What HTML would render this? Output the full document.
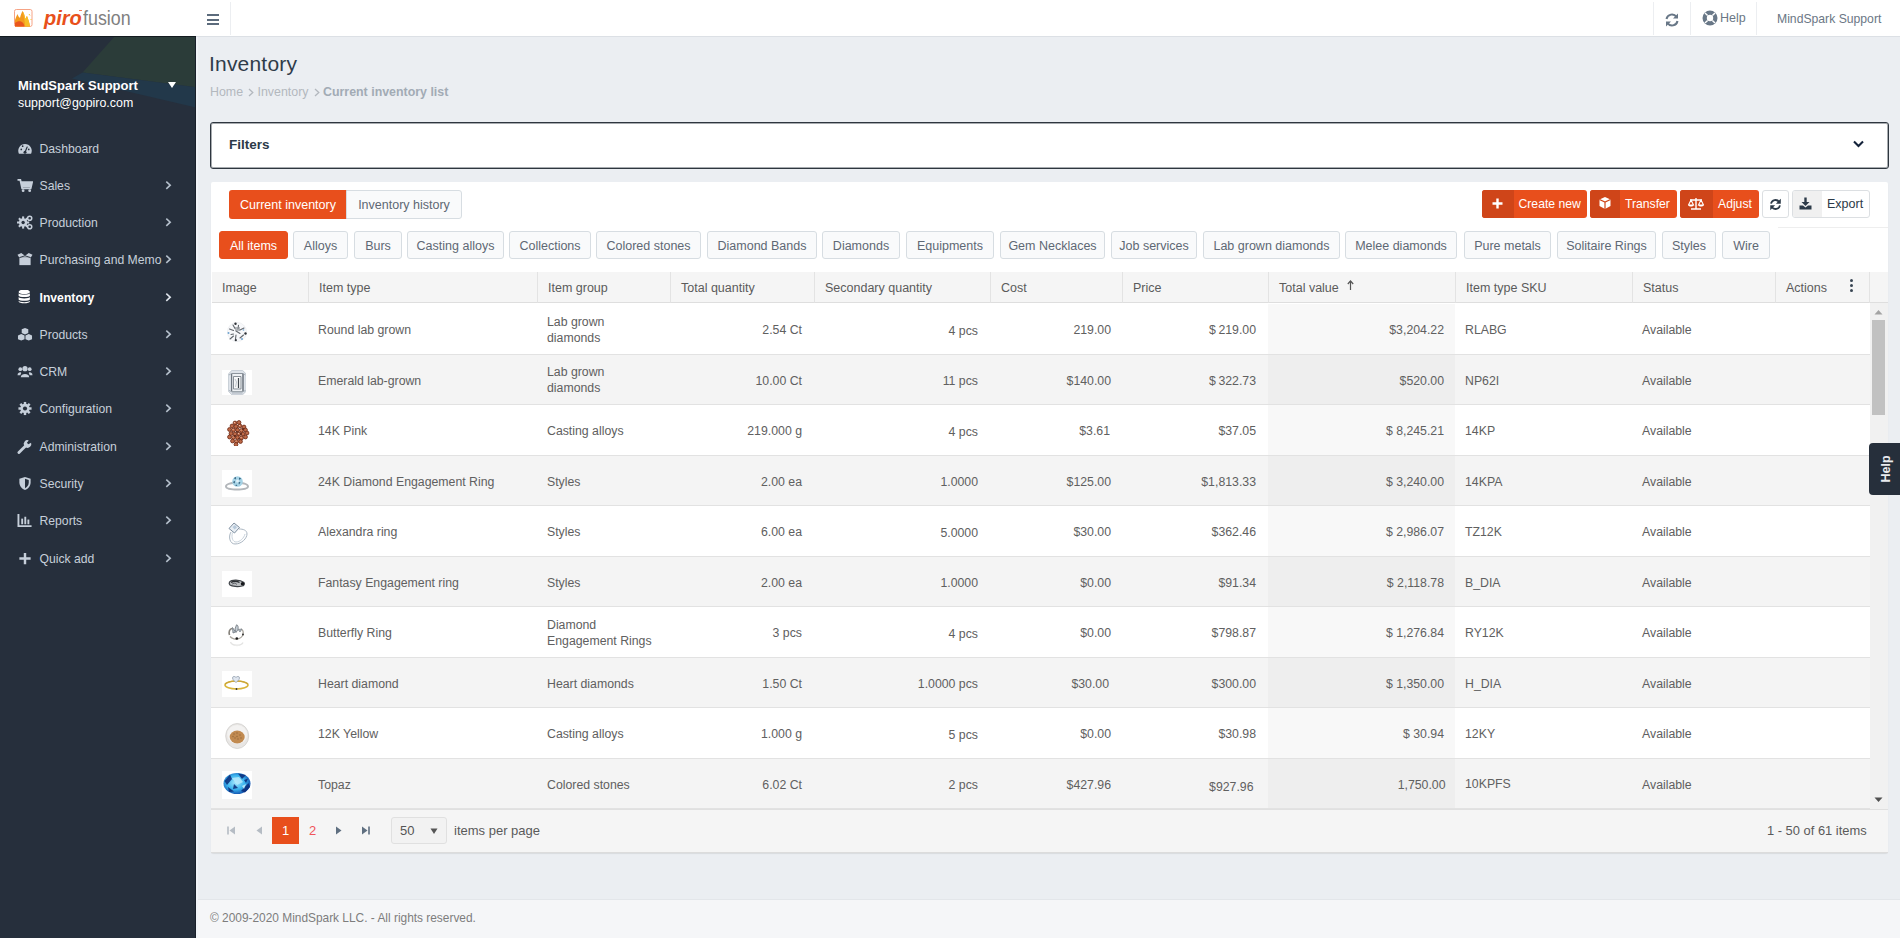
<!DOCTYPE html><html><head><meta charset="utf-8"><style>
*{box-sizing:border-box;margin:0;padding:0}
html,body{width:1900px;height:940px;overflow:hidden}
body{font-family:"Liberation Sans",sans-serif;background:#ebeef2;color:#555;position:relative;font-size:12.5px}
.abs{position:absolute}
#top{left:0;top:0;width:1900px;height:37px;background:#fff;border-bottom:1px solid #dce0e5}
#side{left:0;top:36px;width:196px;height:902px;background:#262f3b;overflow:hidden}
.menu{position:absolute;left:0;width:196px;height:37px;color:#c6cfda;font-size:12.2px;white-space:nowrap}
.menu .ic{position:absolute;left:17px;top:11px;width:16px;height:15px}
.menu .tx{position:absolute;left:39.5px;top:12px;line-height:15px}
.menu .chev{position:absolute;left:165px;top:13px;width:7px;height:10px}
.chip{position:absolute;top:231px;height:28px;border:1px solid #d7dde2;border-radius:3px;background:#f9fafb;color:#5e6874;font-size:12.5px;text-align:center;line-height:29px;white-space:nowrap}
.chip.on{background:#e84f1c;border-color:#e84f1c;color:#fff}
.hd{position:absolute;top:272px;height:31px;line-height:33.5px;background:#f5f5f5;border-bottom:1px solid #dedede;border-left:1px solid #e3e3e3;color:#5b5b5b;font-size:12.5px;padding-left:10px;white-space:nowrap}
.row{position:absolute;left:211px;width:1659px;border-bottom:1px solid #e2e2e2}
.cell{position:absolute;top:0;height:100%;color:#606060;font-size:12.3px;white-space:nowrap}
.btn{position:absolute;top:190px;height:28px;border-radius:3px;background:#e84f1c;color:#fff;font-size:12.2px;line-height:28px;white-space:nowrap;overflow:hidden}
.btn .bi{position:absolute;left:0;top:0;height:28px;background:#cf4519}
.btn .bt{position:absolute;top:0}
</style></head><body>
<div id="top" class="abs">
<svg class="abs" style="left:13.5px;top:9px" width="19" height="18" viewBox="0 0 19 18">
<rect x="0.5" y="0.5" width="17.5" height="17" rx="1.8" fill="#fff" stroke="#f6a385" stroke-width="1"/>
<path d="M1 17.5 L1 11 C2 8 3 6 3.5 5 C4 7 5 8 6 9 C6.5 6 8 3 8.5 2 C10 4 11 7 11 10 C12 9 12.5 7.5 13 7 C14 10 15.5 13 16 17.5 Z" fill="#f39a1e"/>
<path d="M8.5 2 C10 4 11 7 11 10 C12 9 12.5 7.5 13 7 C14 10 15.5 13 16 17.5 L11 17.5 C11 13 10 8 8.5 2 Z" fill="#f6bd25"/>
<path d="M1 17.5 L1 14 C2.5 12.5 5 12 7 12.5 C9 13 10 15 10.5 17.5 Z" fill="#e9561d"/>
<path d="M15 5 L16 6.5 M16.5 10 L17.5 11" stroke="#f6bd25" stroke-width="0.9"/>
</svg>
<div class="abs" style="left:44px;top:5px;font-size:21px;line-height:26px;white-space:nowrap;color:#e8501b;font-style:italic;font-weight:bold;transform:scaleX(0.95);transform-origin:0 0">piro</div>
<div class="abs" style="left:82.5px;top:5px;font-size:21px;line-height:26px;white-space:nowrap;color:#808080;transform:scaleX(0.85);transform-origin:0 0">fusion</div>
<div class="abs" style="left:78.5px;top:10px;width:3px;height:1px;background:#f08060"></div>
<div class="abs" style="left:207px;top:14px;width:12px;height:2px;background:#5c6b7c"></div>
<div class="abs" style="left:207px;top:18.5px;width:12px;height:2px;background:#5c6b7c"></div>
<div class="abs" style="left:207px;top:23px;width:12px;height:2px;background:#5c6b7c"></div>
<div class="abs" style="left:230px;top:2px;width:1px;height:33px;background:#eceef1"></div>
<div class="abs" style="left:1653px;top:2px;width:1px;height:33px;background:#eceef1"></div>
<div class="abs" style="left:1690px;top:2px;width:1px;height:33px;background:#eceef1"></div>
<div class="abs" style="left:1756px;top:2px;width:1px;height:33px;background:#eceef1"></div>
<svg class="abs" style="left:1664px;top:12px" width="16" height="16" viewBox="0 0 16 16"><g fill="none" stroke="#687787" stroke-width="2"><path d="M2.5 7 A5.5 5.5 0 0 1 12.5 5"/><path d="M13.5 9 A5.5 5.5 0 0 1 3.5 11"/></g><path d="M14 1.5 V6.5 H9 Z" fill="#687787"/><path d="M2 14.5 V9.5 H7 Z" fill="#687787"/></svg>
<svg class="abs" style="left:1702px;top:10px" width="16" height="16" viewBox="0 0 16 16"><circle cx="8" cy="8" r="7.5" fill="#687787"/><circle cx="8" cy="8" r="3.2" fill="#fff"/><g stroke="#fff" stroke-width="1.4"><path d="M3 3 L5.6 5.6"/><path d="M13 3 L10.4 5.6"/><path d="M3 13 L5.6 10.4"/><path d="M13 13 L10.4 10.4"/></g><circle cx="8" cy="8" r="2.3" fill="#687787" opacity="0"/></svg>
<div class="abs" style="left:1720px;top:10.7px;font-size:12.5px;line-height:15px;color:#6b7785">Help</div>
<div class="abs" style="left:1777px;top:11.7px;font-size:12.2px;line-height:15px;color:#6b7785;white-space:nowrap">MindSpark Support</div>
</div>
<div id="side" class="abs">
<svg class="abs" style="left:0;top:0" width="196" height="904" viewBox="0 0 196 904">
<path d="M82.6 36.4 L35 84 L0 120 L0 904 L196 904 L196 0 Z" fill="#262f3c"/>
<path d="M115 0 L196 0 L196 51.3 L82.6 36.4 Z" fill="#2b3c39"/>
<path d="M82.6 36.4 L196 51.3 L196 71.5 L72 42.6 Z" fill="#22384a"/>
</svg>
<div class="abs" style="left:18px;top:42px;color:#fff;font-weight:bold;font-size:13px;line-height:16px;white-space:nowrap">MindSpark Support</div>
<svg class="abs" style="left:168px;top:46px" width="8" height="6" viewBox="0 0 8 6"><path d="M0 0 H8 L4 6 Z" fill="#fff"/></svg>
<div class="abs" style="left:18px;top:59px;color:#fff;font-size:12.4px;line-height:16px;white-space:nowrap">support@gopiro.com</div>
<div class="menu" style="top:93.5px;color:#c6cfda;font-weight:normal">
<svg class="ic" viewBox="0 0 16 16"><path d="M1.5 13.5 A7.2 7.2 0 1 1 14.5 13.5 Z" fill="#c6cfda"/><g stroke="#262f3b" stroke-width="1.3"><path d="M8 12 L10.5 6"/></g><circle cx="8" cy="12" r="1.6" fill="#262f3b"/><circle cx="4" cy="9" r="0.9" fill="#262f3b"/><circle cx="5.5" cy="5.5" r="0.9" fill="#262f3b"/><circle cx="12" cy="9" r="0.9" fill="#262f3b"/></svg>
<div class="tx">Dashboard</div>
</div>
<div class="menu" style="top:130.5px;color:#c6cfda;font-weight:normal">
<svg class="ic" viewBox="0 0 16 16"><path d="M0 2 H3 L5 11 H14 L15.5 4.5 H4" fill="none" stroke="#c6cfda" stroke-width="2"/><path d="M4 5 H15 L14 10 H5 Z" fill="#c6cfda"/><circle cx="6" cy="13.5" r="1.5" fill="#c6cfda"/><circle cx="13" cy="13.5" r="1.5" fill="#c6cfda"/></svg>
<div class="tx">Sales</div>
<svg class="chev" viewBox="0 0 7 10"><path d="M1.3 1.6 L5.2 5.2 L1.3 8.8" fill="none" stroke="#b4bfcb" stroke-width="1.6"/></svg>
</div>
<div class="menu" style="top:167.5px;color:#c6cfda;font-weight:normal">
<svg class="ic" viewBox="0 0 16 16"><circle cx="6" cy="8" r="4.5" fill="#c6cfda"/><g stroke="#c6cfda" stroke-width="2.2"><path d="M6 1.5 V14.5"/><path d="M-0.5 8 H12.5"/><path d="M1.5 3.5 L10.5 12.5"/><path d="M10.5 3.5 L1.5 12.5"/></g><circle cx="6" cy="8" r="1.8" fill="#262f3b"/><circle cx="13" cy="3.5" r="2.2" fill="none" stroke="#c6cfda" stroke-width="1.6"/><circle cx="13" cy="12.5" r="2.2" fill="none" stroke="#c6cfda" stroke-width="1.6"/></svg>
<div class="tx">Production</div>
<svg class="chev" viewBox="0 0 7 10"><path d="M1.3 1.6 L5.2 5.2 L1.3 8.8" fill="none" stroke="#b4bfcb" stroke-width="1.6"/></svg>
</div>
<div class="menu" style="top:205.0px;color:#c6cfda;font-weight:normal">
<svg class="ic" viewBox="0 0 16 16"><path d="M2 6 H14 V14 H2 Z" fill="#c6cfda"/><path d="M0 3 L4 1 L8 4 L12 1 L16 3 L14 6 H2 Z" fill="#c6cfda"/><path d="M2 6 L8 4 L14 6" fill="none" stroke="#262f3b" stroke-width="1"/></svg>
<div class="tx">Purchasing and Memo</div>
<svg class="chev" viewBox="0 0 7 10"><path d="M1.3 1.6 L5.2 5.2 L1.3 8.8" fill="none" stroke="#b4bfcb" stroke-width="1.6"/></svg>
</div>
<div class="menu" style="top:242.5px;color:#fff;font-weight:bold">
<svg class="ic" viewBox="0 0 16 16"><g transform="translate(-0.8,-1)"><ellipse cx="8" cy="3" rx="6" ry="2.5" fill="#fff"/><path d="M2 4.5 V7 C2 9 14 9 14 7 V4.5 C14 6.5 2 6.5 2 4.5 Z" fill="#fff"/><path d="M2 8.5 V11 C2 13 14 13 14 11 V8.5 C14 10.5 2 10.5 2 8.5 Z" fill="#fff"/><path d="M2 12.5 V13 C2 16 14 16 14 13 V12.5 C14 14.5 2 14.5 2 12.5 Z" fill="#fff"/></g></svg>
<div class="tx">Inventory</div>
<svg class="chev" viewBox="0 0 7 10"><path d="M1.3 1.6 L5.2 5.2 L1.3 8.8" fill="none" stroke="#dde3ea" stroke-width="1.6"/></svg>
</div>
<div class="menu" style="top:279.5px;color:#c6cfda;font-weight:normal">
<svg class="ic" viewBox="0 0 16 16"><path d="M8 1 L11.5 2.5 V6.5 L8 8 L4.5 6.5 V2.5 Z" fill="#c6cfda"/><path d="M4 7.5 L7.5 9 V13 L4 14.5 L0.5 13 V9 Z" fill="#c6cfda"/><path d="M12 7.5 L15.5 9 V13 L12 14.5 L8.5 13 V9 Z" fill="#c6cfda"/></svg>
<div class="tx">Products</div>
<svg class="chev" viewBox="0 0 7 10"><path d="M1.3 1.6 L5.2 5.2 L1.3 8.8" fill="none" stroke="#b4bfcb" stroke-width="1.6"/></svg>
</div>
<div class="menu" style="top:316.5px;color:#c6cfda;font-weight:normal">
<svg class="ic" viewBox="0 0 16 16"><circle cx="8" cy="5" r="2.8" fill="#c6cfda"/><path d="M3.5 14 C3.5 9.5 12.5 9.5 12.5 14 Z" fill="#c6cfda"/><circle cx="3" cy="5.5" r="2" fill="#c6cfda"/><circle cx="13" cy="5.5" r="2" fill="#c6cfda"/><path d="M0 12 C0 8.5 4 8.5 4 9.5 L3 12 Z" fill="#c6cfda"/><path d="M16 12 C16 8.5 12 8.5 12 9.5 L13 12 Z" fill="#c6cfda"/></svg>
<div class="tx">CRM</div>
<svg class="chev" viewBox="0 0 7 10"><path d="M1.3 1.6 L5.2 5.2 L1.3 8.8" fill="none" stroke="#b4bfcb" stroke-width="1.6"/></svg>
</div>
<div class="menu" style="top:354.0px;color:#c6cfda;font-weight:normal">
<svg class="ic" viewBox="0 0 16 16"><circle cx="8" cy="8" r="5" fill="#c6cfda"/><g stroke="#c6cfda" stroke-width="2.6"><path d="M8 1 V15"/><path d="M1 8 H15"/><path d="M3 3 L13 13"/><path d="M13 3 L3 13"/></g><circle cx="8" cy="8" r="2.2" fill="#262f3b"/></svg>
<div class="tx">Configuration</div>
<svg class="chev" viewBox="0 0 7 10"><path d="M1.3 1.6 L5.2 5.2 L1.3 8.8" fill="none" stroke="#b4bfcb" stroke-width="1.6"/></svg>
</div>
<div class="menu" style="top:391.5px;color:#c6cfda;font-weight:normal">
<svg class="ic" viewBox="0 0 16 16"><path d="M1.5 14.5 L8 8" stroke="#c6cfda" stroke-width="3" stroke-linecap="round"/><path d="M7 7 A4 4 0 0 1 12 1.5 L10 4 L11.5 5.5 L14.5 4 A4 4 0 0 1 9 9 Z" fill="#c6cfda"/></svg>
<div class="tx">Administration</div>
<svg class="chev" viewBox="0 0 7 10"><path d="M1.3 1.6 L5.2 5.2 L1.3 8.8" fill="none" stroke="#b4bfcb" stroke-width="1.6"/></svg>
</div>
<div class="menu" style="top:428.5px;color:#c6cfda;font-weight:normal">
<svg class="ic" viewBox="0 0 16 16"><path d="M8 1 L14 3 V7 C14 11 11 14 8 15 C5 14 2 11 2 7 V3 Z" fill="#c6cfda"/><path d="M8 3 L12 4.3 V7 C12 10 10 12 8 13 Z" fill="#262f3b"/></svg>
<div class="tx">Security</div>
<svg class="chev" viewBox="0 0 7 10"><path d="M1.3 1.6 L5.2 5.2 L1.3 8.8" fill="none" stroke="#b4bfcb" stroke-width="1.6"/></svg>
</div>
<div class="menu" style="top:466.0px;color:#c6cfda;font-weight:normal">
<svg class="ic" viewBox="0 0 16 16"><path d="M1 1 V14 H15" fill="none" stroke="#c6cfda" stroke-width="2"/><rect x="4" y="6" width="2" height="6" fill="#c6cfda"/><rect x="7.3" y="4" width="2" height="8" fill="#c6cfda"/><rect x="10.6" y="7" width="2" height="5" fill="#c6cfda"/></svg>
<div class="tx">Reports</div>
<svg class="chev" viewBox="0 0 7 10"><path d="M1.3 1.6 L5.2 5.2 L1.3 8.8" fill="none" stroke="#b4bfcb" stroke-width="1.6"/></svg>
</div>
<div class="menu" style="top:503.5px;color:#c6cfda;font-weight:normal">
<svg class="ic" viewBox="0 0 16 16"><path d="M8 2 V14 M2 8 H14" stroke="#c6cfda" stroke-width="2.6"/></svg>
<div class="tx">Quick add</div>
<svg class="chev" viewBox="0 0 7 10"><path d="M1.3 1.6 L5.2 5.2 L1.3 8.8" fill="none" stroke="#b4bfcb" stroke-width="1.6"/></svg>
</div>
</div>
<div class="abs" style="left:209px;top:51px;font-size:21px;line-height:26px;letter-spacing:0.2px;color:#2f3c4a;white-space:nowrap">Inventory</div>
<div class="abs" style="left:210px;top:85px;font-size:12.4px;line-height:15px;white-space:nowrap;color:#b3b8be">Home</div>
<div class="abs" style="left:257.5px;top:85px;font-size:12.4px;line-height:15px;white-space:nowrap;color:#b3b8be">Inventory</div>
<div class="abs" style="left:323px;top:85px;font-size:12.4px;line-height:15px;white-space:nowrap;color:#a2abb5;font-weight:bold">Current inventory list</div>
<svg class="abs" style="left:247.5px;top:88px" width="6" height="9" viewBox="0 0 6 9"><path d="M1 1 L4.8 4.5 L1 8" fill="none" stroke="#b3b8be" stroke-width="1.3"/></svg>
<svg class="abs" style="left:313.5px;top:88px" width="6" height="9" viewBox="0 0 6 9"><path d="M1 1 L4.8 4.5 L1 8" fill="none" stroke="#b3b8be" stroke-width="1.3"/></svg>
<div class="abs" style="left:210px;top:122px;width:1679px;height:47px;background:#fff;border:1px solid #2e363f;box-shadow:inset 0 0 0 1px rgba(60,68,77,0.45);border-radius:3px"></div>
<div class="abs" style="left:229px;top:137px;font-size:13.5px;line-height:16px;font-weight:bold;color:#2c3a48">Filters</div>
<svg class="abs" style="left:1853px;top:140px" width="11" height="8" viewBox="0 0 11 8"><path d="M1 1.5 L5.5 6 L10 1.5" fill="none" stroke="#14233a" stroke-width="2.1"/></svg>
<div class="abs" style="left:211px;top:182px;width:1677px;height:671px;background:#fff;border-radius:2px;box-shadow:0 1px 1px rgba(0,0,0,0.08)"></div>
<div class="abs" style="left:229px;top:190px;width:118px;height:29px;background:#e84f1c;border-radius:3px 0 0 3px;color:#fff;font-size:12.5px;line-height:31px;text-align:center;white-space:nowrap">Current inventory</div>
<div class="abs" style="left:346px;top:190px;width:116px;height:29px;background:#f9fafb;border:1px solid #d7dde2;border-radius:0 3px 3px 0;color:#5e6874;font-size:12.5px;line-height:29px;text-align:center;white-space:nowrap">Inventory history</div>
<div class="btn" style="left:1482px;width:105px"><div class="bi" style="width:32px"><svg class="abs" style="left:10px;top:8px" width="11" height="11" viewBox="0 0 11 11"><path d="M5.5 0.5 V10.5 M0.5 5.5 H10.5" stroke="#fff" stroke-width="2.4"/></svg></div><div class="bt" style="left:36.5px">Create new</div></div>
<div class="btn" style="left:1590px;width:87px"><div class="bi" style="width:29.5px"><svg class="abs" style="left:8px;top:6px" width="14" height="14" viewBox="0 0 14 14"><path d="M7 1 L12.5 3.5 V10 L7 13 L1.5 10 V3.5 Z" fill="#fff"/><path d="M1.5 3.5 L7 6 L12.5 3.5 M7 6 V13" fill="none" stroke="#cf4519" stroke-width="1.2"/></svg></div><div class="bt" style="left:35px">Transfer</div></div>
<div class="btn" style="left:1680px;width:79px"><div class="bi" style="width:33px"><svg class="abs" style="left:8px;top:7px" width="16" height="13" viewBox="0 0 16 13"><path d="M8 1 V12 M3 12 H13 M2 3 H14" stroke="#fff" stroke-width="1.4" fill="none"/><path d="M0.5 8 L3 3 L5.5 8 Z M10.5 8 L13 3 L15.5 8 Z" fill="none" stroke="#fff" stroke-width="1.1"/><path d="M0.5 8 H5.5 C5.5 10 0.5 10 0.5 8 Z M10.5 8 H15.5 C15.5 10 10.5 10 10.5 8 Z" fill="#fff"/></svg></div><div class="bt" style="left:38px">Adjust</div></div>
<div class="abs" style="left:1762px;top:190px;width:27px;height:28px;border:1px solid #dcdfe2;border-radius:3px;background:#fff"></div>
<svg class="abs" style="left:1769px;top:198px" width="13" height="13" viewBox="0 0 16 16"><g fill="none" stroke="#2c3a48" stroke-width="2.2"><path d="M2.5 7 A5.5 5.5 0 0 1 12.5 5"/><path d="M13.5 9 A5.5 5.5 0 0 1 3.5 11"/></g><path d="M14.5 1 V7 H8.5 Z" fill="#2c3a48"/><path d="M1.5 15 V9 H7.5 Z" fill="#2c3a48"/></svg>
<div class="abs" style="left:1792px;top:190px;width:78px;height:28px;border:1px solid #dcdfe2;border-radius:3px;background:#fff;overflow:hidden"><div class="abs" style="left:0;top:0;width:29px;height:26px;background:#f0f0f0"></div><div class="abs" style="left:34px;top:0;line-height:26px;font-size:12.5px;color:#2c3a48">Export</div></div>
<svg class="abs" style="left:1799px;top:197px" width="13" height="13" viewBox="0 0 13 13"><path d="M6.5 0.5 V7" stroke="#2c3a48" stroke-width="2.4"/><path d="M2.5 5 H10.5 L6.5 9 Z" fill="#2c3a48"/><path d="M0.5 8.5 H4 L6.5 10.5 L9 8.5 H12.5 V12.5 H0.5 Z" fill="#2c3a48"/></svg>
<div class="abs" style="left:1778px;top:227px;width:110px;height:1px;background:#eeeeee"></div>
<div class="chip on" style="left:219px;width:69px">All items</div>
<div class="chip" style="left:293px;width:55px">Alloys</div>
<div class="chip" style="left:354px;width:48px">Burs</div>
<div class="chip" style="left:407px;width:97px">Casting alloys</div>
<div class="chip" style="left:509px;width:82px">Collections</div>
<div class="chip" style="left:596px;width:105px">Colored stones</div>
<div class="chip" style="left:707px;width:110px">Diamond Bands</div>
<div class="chip" style="left:822px;width:78px">Diamonds</div>
<div class="chip" style="left:906px;width:88px">Equipments</div>
<div class="chip" style="left:1000px;width:105px">Gem Necklaces</div>
<div class="chip" style="left:1111px;width:86px">Job services</div>
<div class="chip" style="left:1203px;width:137px">Lab grown diamonds</div>
<div class="chip" style="left:1345px;width:112px">Melee diamonds</div>
<div class="chip" style="left:1464px;width:87px">Pure metals</div>
<div class="chip" style="left:1557px;width:99px">Solitaire Rings</div>
<div class="chip" style="left:1662px;width:54px">Styles</div>
<div class="chip" style="left:1722px;width:48px">Wire</div>
<div class="abs" style="left:212px;top:272px;width:1676px;height:31px;background:#f5f5f5;border-bottom:1px solid #dedede"></div>
<div class="hd" style="left:212px;width:96px;border-left:none;">Image</div>
<div class="hd" style="left:308px;width:229px;">Item type</div>
<div class="hd" style="left:537px;width:133px;">Item group</div>
<div class="hd" style="left:670px;width:144px;">Total quantity</div>
<div class="hd" style="left:814px;width:176px;">Secondary quantity</div>
<div class="hd" style="left:990px;width:132px;">Cost</div>
<div class="hd" style="left:1122px;width:146px;">Price</div>
<div class="hd" style="left:1268px;width:187px;">Total value</div>
<div class="hd" style="left:1455px;width:177px;">Item type SKU</div>
<div class="hd" style="left:1632px;width:143px;">Status</div>
<div class="hd" style="left:1775px;width:95px;">Actions</div>
<div class="abs" style="left:1869px;top:272px;width:1px;height:31px;background:#e3e3e3"></div>
<svg class="abs" style="left:1347px;top:280px" width="7" height="11" viewBox="0 0 7 11"><path d="M3.5 1 V10" stroke="#555" stroke-width="1.2"/><path d="M0.8 4 L3.5 1 L6.2 4" fill="none" stroke="#555" stroke-width="1.2"/></svg>
<div class="abs" style="left:1850px;top:279px;width:3px;height:3px;border-radius:50%;background:#3a4654"></div><div class="abs" style="left:1850px;top:284px;width:3px;height:3px;border-radius:50%;background:#3a4654"></div><div class="abs" style="left:1850px;top:289px;width:3px;height:3px;border-radius:50%;background:#3a4654"></div>
<div class="row" style="top:304.30px;height:50.5px;background:#fff">
<div class="abs" style="left:1057px;top:0;width:187px;height:100%;background:#f8f8f8"></div>
<div class="abs" style="left:10px;top:13px;width:30px;height:25px"></div>
<div class="cell" style="left:107px;top:0;line-height:52px">Round lab grown</div>
<div class="cell" style="left:336px;top:9.5px;line-height:16px;height:auto">Lab grown<br>diamonds</div>
<div class="cell" style="right:1068px;top:0px;line-height:52px;text-align:right">2.54 Ct</div>
<div class="cell" style="right:892px;top:0.5px;line-height:52px;text-align:right">4 pcs</div>
<div class="cell" style="right:759px;top:0px;line-height:52px;text-align:right">219.00</div>
<div class="cell" style="right:614px;top:0px;line-height:52px;text-align:right">$ 219.00</div>
<div class="cell" style="right:426px;top:0px;line-height:52px;text-align:right">$3,204.22</div>
<div class="cell" style="left:1254px;top:0px;line-height:52px">RLABG</div>
<div class="cell" style="left:1431px;top:0;line-height:52px">Available</div>
</div>
<div class="row" style="top:354.80px;height:50.5px;background:#f4f4f4">
<div class="abs" style="left:1057px;top:0;width:187px;height:100%;background:#eeeeee"></div>
<div class="abs" style="left:10px;top:13px;width:30px;height:25px"></div>
<div class="cell" style="left:107px;top:0;line-height:52px">Emerald lab-grown</div>
<div class="cell" style="left:336px;top:9.5px;line-height:16px;height:auto">Lab grown<br>diamonds</div>
<div class="cell" style="right:1068px;top:0px;line-height:52px;text-align:right">10.00 Ct</div>
<div class="cell" style="right:892px;top:0.5px;line-height:52px;text-align:right">11 pcs</div>
<div class="cell" style="right:759px;top:0px;line-height:52px;text-align:right">$140.00</div>
<div class="cell" style="right:614px;top:0px;line-height:52px;text-align:right">$ 322.73</div>
<div class="cell" style="right:426px;top:0px;line-height:52px;text-align:right">$520.00</div>
<div class="cell" style="left:1254px;top:0px;line-height:52px">NP62I</div>
<div class="cell" style="left:1431px;top:0;line-height:52px">Available</div>
</div>
<div class="row" style="top:405.30px;height:50.5px;background:#fff">
<div class="abs" style="left:1057px;top:0;width:187px;height:100%;background:#f8f8f8"></div>
<div class="abs" style="left:10px;top:13px;width:30px;height:25px"></div>
<div class="cell" style="left:107px;top:0;line-height:52px">14K Pink</div>
<div class="cell" style="left:336px;top:0;line-height:52px">Casting alloys</div>
<div class="cell" style="right:1068px;top:0px;line-height:52px;text-align:right">219.000 g</div>
<div class="cell" style="right:892px;top:0.5px;line-height:52px;text-align:right">4 pcs</div>
<div class="cell" style="right:760px;top:0px;line-height:52px;text-align:right">$3.61</div>
<div class="cell" style="right:614px;top:0px;line-height:52px;text-align:right">$37.05</div>
<div class="cell" style="right:426px;top:0px;line-height:52px;text-align:right">$ 8,245.21</div>
<div class="cell" style="left:1254px;top:0px;line-height:52px">14KP</div>
<div class="cell" style="left:1431px;top:0;line-height:52px">Available</div>
</div>
<div class="row" style="top:455.80px;height:50.5px;background:#f4f4f4">
<div class="abs" style="left:1057px;top:0;width:187px;height:100%;background:#eeeeee"></div>
<div class="abs" style="left:10px;top:13px;width:30px;height:25px"></div>
<div class="cell" style="left:107px;top:0;line-height:52px">24K Diamond Engagement Ring</div>
<div class="cell" style="left:336px;top:0;line-height:52px">Styles</div>
<div class="cell" style="right:1068px;top:0px;line-height:52px;text-align:right">2.00 ea</div>
<div class="cell" style="right:892px;top:0px;line-height:52px;text-align:right">1.0000</div>
<div class="cell" style="right:759px;top:0px;line-height:52px;text-align:right">$125.00</div>
<div class="cell" style="right:614px;top:0px;line-height:52px;text-align:right">$1,813.33</div>
<div class="cell" style="right:426px;top:0px;line-height:52px;text-align:right">$ 3,240.00</div>
<div class="cell" style="left:1254px;top:0px;line-height:52px">14KPA</div>
<div class="cell" style="left:1431px;top:0;line-height:52px">Available</div>
</div>
<div class="row" style="top:506.30px;height:50.5px;background:#fff">
<div class="abs" style="left:1057px;top:0;width:187px;height:100%;background:#f8f8f8"></div>
<div class="abs" style="left:10px;top:13px;width:30px;height:25px"></div>
<div class="cell" style="left:107px;top:0;line-height:52px">Alexandra ring</div>
<div class="cell" style="left:336px;top:0;line-height:52px">Styles</div>
<div class="cell" style="right:1068px;top:0px;line-height:52px;text-align:right">6.00 ea</div>
<div class="cell" style="right:892px;top:0.5px;line-height:52px;text-align:right">5.0000</div>
<div class="cell" style="right:759px;top:0px;line-height:52px;text-align:right">$30.00</div>
<div class="cell" style="right:614px;top:0px;line-height:52px;text-align:right">$362.46</div>
<div class="cell" style="right:426px;top:0px;line-height:52px;text-align:right">$ 2,986.07</div>
<div class="cell" style="left:1254px;top:0px;line-height:52px">TZ12K</div>
<div class="cell" style="left:1431px;top:0;line-height:52px">Available</div>
</div>
<div class="row" style="top:556.80px;height:50.5px;background:#f4f4f4">
<div class="abs" style="left:1057px;top:0;width:187px;height:100%;background:#eeeeee"></div>
<div class="abs" style="left:10px;top:13px;width:30px;height:25px"></div>
<div class="cell" style="left:107px;top:0;line-height:52px">Fantasy Engagement ring</div>
<div class="cell" style="left:336px;top:0;line-height:52px">Styles</div>
<div class="cell" style="right:1068px;top:0px;line-height:52px;text-align:right">2.00 ea</div>
<div class="cell" style="right:892px;top:0.5px;line-height:52px;text-align:right">1.0000</div>
<div class="cell" style="right:759px;top:0px;line-height:52px;text-align:right">$0.00</div>
<div class="cell" style="right:614px;top:0px;line-height:52px;text-align:right">$91.34</div>
<div class="cell" style="right:426px;top:0px;line-height:52px;text-align:right">$ 2,118.78</div>
<div class="cell" style="left:1254px;top:0px;line-height:52px">B_DIA</div>
<div class="cell" style="left:1431px;top:0;line-height:52px">Available</div>
</div>
<div class="row" style="top:607.30px;height:50.5px;background:#fff">
<div class="abs" style="left:1057px;top:0;width:187px;height:100%;background:#f8f8f8"></div>
<div class="abs" style="left:10px;top:13px;width:30px;height:25px"></div>
<div class="cell" style="left:107px;top:0;line-height:52px">Butterfly Ring</div>
<div class="cell" style="left:336px;top:9.5px;line-height:16px;height:auto">Diamond<br>Engagement Rings</div>
<div class="cell" style="right:1068px;top:0px;line-height:52px;text-align:right">3 pcs</div>
<div class="cell" style="right:892px;top:0.5px;line-height:52px;text-align:right">4 pcs</div>
<div class="cell" style="right:759px;top:0px;line-height:52px;text-align:right">$0.00</div>
<div class="cell" style="right:614px;top:0px;line-height:52px;text-align:right">$798.87</div>
<div class="cell" style="right:426px;top:0px;line-height:52px;text-align:right">$ 1,276.84</div>
<div class="cell" style="left:1254px;top:0px;line-height:52px">RY12K</div>
<div class="cell" style="left:1431px;top:0;line-height:52px">Available</div>
</div>
<div class="row" style="top:657.80px;height:50.5px;background:#f4f4f4">
<div class="abs" style="left:1057px;top:0;width:187px;height:100%;background:#eeeeee"></div>
<div class="abs" style="left:10px;top:13px;width:30px;height:25px"></div>
<div class="cell" style="left:107px;top:0;line-height:52px">Heart diamond</div>
<div class="cell" style="left:336px;top:0;line-height:52px">Heart diamonds</div>
<div class="cell" style="right:1068px;top:0px;line-height:52px;text-align:right">1.50 Ct</div>
<div class="cell" style="right:892px;top:0px;line-height:52px;text-align:right">1.0000 pcs</div>
<div class="cell" style="right:761px;top:0px;line-height:52px;text-align:right">$30.00</div>
<div class="cell" style="right:614px;top:0px;line-height:52px;text-align:right">$300.00</div>
<div class="cell" style="right:426px;top:0px;line-height:52px;text-align:right">$ 1,350.00</div>
<div class="cell" style="left:1254px;top:0px;line-height:52px">H_DIA</div>
<div class="cell" style="left:1431px;top:0;line-height:52px">Available</div>
</div>
<div class="row" style="top:708.30px;height:50.5px;background:#fff">
<div class="abs" style="left:1057px;top:0;width:187px;height:100%;background:#f8f8f8"></div>
<div class="abs" style="left:10px;top:13px;width:30px;height:25px"></div>
<div class="cell" style="left:107px;top:0;line-height:52px">12K Yellow</div>
<div class="cell" style="left:336px;top:0;line-height:52px">Casting alloys</div>
<div class="cell" style="right:1068px;top:0px;line-height:52px;text-align:right">1.000 g</div>
<div class="cell" style="right:892px;top:0.5px;line-height:52px;text-align:right">5 pcs</div>
<div class="cell" style="right:759px;top:0px;line-height:52px;text-align:right">$0.00</div>
<div class="cell" style="right:614px;top:0px;line-height:52px;text-align:right">$30.98</div>
<div class="cell" style="right:426px;top:0px;line-height:52px;text-align:right">$ 30.94</div>
<div class="cell" style="left:1254px;top:0px;line-height:52px">12KY</div>
<div class="cell" style="left:1431px;top:0;line-height:52px">Available</div>
</div>
<div class="row" style="top:758.80px;height:50.5px;background:#f4f4f4">
<div class="abs" style="left:1057px;top:0;width:187px;height:100%;background:#eeeeee"></div>
<div class="abs" style="left:10px;top:13px;width:30px;height:25px"></div>
<div class="cell" style="left:107px;top:0;line-height:52px">Topaz</div>
<div class="cell" style="left:336px;top:0;line-height:52px">Colored stones</div>
<div class="cell" style="right:1068px;top:0px;line-height:52px;text-align:right">6.02 Ct</div>
<div class="cell" style="right:892px;top:0.5px;line-height:52px;text-align:right">2 pcs</div>
<div class="cell" style="right:759px;top:0px;line-height:52px;text-align:right">$427.96</div>
<div class="cell" style="right:616.5px;top:2.5px;line-height:52px;text-align:right">$927.96</div>
<div class="cell" style="right:424.5px;top:0px;line-height:52px;text-align:right">1,750.00</div>
<div class="cell" style="left:1254px;top:-0.7px;line-height:52px">10KPFS</div>
<div class="cell" style="left:1431px;top:0;line-height:52px">Available</div>
</div>
<svg class="abs" style="left:227px;top:321.7px" width="20" height="20" viewBox="0 0 20 20"><circle cx="10" cy="10" r="9.6" fill="#f7f8fa" stroke="#e2e5e8" stroke-width="0.5"/><g stroke="#61666c" stroke-width="1.1" stroke-linecap="round" fill="none"><path d="M6 3 L8 6.5"/><path d="M11.5 3.2 L11 7"/><path d="M2.5 7 L6.5 8.5"/><path d="M9 9 L13 11.5"/><path d="M6.5 14 L3 17"/><path d="M9 13 L8.5 17"/><path d="M13 8 L17 6"/><path d="M13 16 L16.5 13"/><path d="M4 12.5 L6.5 12"/></g><g fill="#2f3338"><circle cx="8.5" cy="1.8" r="1.2"/><circle cx="18.5" cy="11.5" r="1.2"/><circle cx="8.8" cy="18.2" r="1.1"/></g><g fill="#8a8f95"><rect x="8" y="5" width="5" height="4" opacity="0.6"/></g><g fill="#6fa3d0"><circle cx="1.5" cy="11" r="1"/><circle cx="15" cy="17" r="1"/><circle cx="16.5" cy="8" r="0.8"/></g></svg>
<div class="abs" style="left:222px;top:369.6px;width:30px;height:25.7px;background:#fff"></div><svg class="abs" style="left:227.8px;top:369.8px" width="18.5" height="25.2" viewBox="0 0 18.5 25.2"><path d="M4 0.3 H14.5 L18.2 4 V21.2 L14.5 24.9 H4 L0.3 21.2 V4 Z" fill="#dfe4ea" stroke="#a9b3bd" stroke-width="0.6"/><path d="M3.5 3.5 H15 V21.7 H3.5 Z" fill="#eef1f4" stroke="#8c949c" stroke-width="1"/><path d="M5.5 6.5 H13 V19 H5.5 Z" fill="#f6f7f8" stroke="#7d858d" stroke-width="0.9"/><path d="M3.6 4 V21 M15 4 V21" stroke="#6f7780" stroke-width="1.3"/><path d="M10.5 8 V18" stroke="#3f464d" stroke-width="1.2"/><path d="M7 9 L8.5 12 L7.5 17" fill="none" stroke="#b3bac2" stroke-width="0.8"/><path d="M1 5 L3.5 3.5 M17.5 5 L15 3.5 M1 20.5 L3.5 21.7 M17.5 20.5 L15 21.7" stroke="#9aa3ad" stroke-width="0.8"/><path d="M4 23 H14.5" stroke="#9aa3ad" stroke-width="0.8"/></svg>
<svg class="abs" style="left:226px;top:420px" width="24" height="26" viewBox="0 0 24 26"><circle cx="9" cy="3" r="1.9" fill="#bf6a48" stroke="#6a2612" stroke-width="0.8"/><circle cx="13" cy="2.5" r="1.9" fill="#bf6a48" stroke="#6a2612" stroke-width="0.8"/><circle cx="6" cy="6" r="1.9" fill="#bf6a48" stroke="#6a2612" stroke-width="0.8"/><circle cx="10" cy="6.5" r="1.9" fill="#bf6a48" stroke="#6a2612" stroke-width="0.8"/><circle cx="14" cy="6" r="1.9" fill="#bf6a48" stroke="#6a2612" stroke-width="0.8"/><circle cx="18" cy="7" r="1.9" fill="#bf6a48" stroke="#6a2612" stroke-width="0.8"/><circle cx="3.5" cy="9.5" r="1.9" fill="#bf6a48" stroke="#6a2612" stroke-width="0.8"/><circle cx="7.5" cy="10" r="1.9" fill="#bf6a48" stroke="#6a2612" stroke-width="0.8"/><circle cx="11.5" cy="10" r="1.9" fill="#bf6a48" stroke="#6a2612" stroke-width="0.8"/><circle cx="15.5" cy="10.5" r="1.9" fill="#bf6a48" stroke="#6a2612" stroke-width="0.8"/><circle cx="19.5" cy="10" r="1.9" fill="#bf6a48" stroke="#6a2612" stroke-width="0.8"/><circle cx="5" cy="13.5" r="1.9" fill="#bf6a48" stroke="#6a2612" stroke-width="0.8"/><circle cx="9" cy="14" r="1.9" fill="#bf6a48" stroke="#6a2612" stroke-width="0.8"/><circle cx="13" cy="14" r="1.9" fill="#bf6a48" stroke="#6a2612" stroke-width="0.8"/><circle cx="17" cy="14" r="1.9" fill="#bf6a48" stroke="#6a2612" stroke-width="0.8"/><circle cx="21" cy="13" r="1.9" fill="#bf6a48" stroke="#6a2612" stroke-width="0.8"/><circle cx="3.5" cy="17" r="1.9" fill="#bf6a48" stroke="#6a2612" stroke-width="0.8"/><circle cx="7.5" cy="17.5" r="1.9" fill="#bf6a48" stroke="#6a2612" stroke-width="0.8"/><circle cx="11.5" cy="17.5" r="1.9" fill="#bf6a48" stroke="#6a2612" stroke-width="0.8"/><circle cx="15.5" cy="18" r="1.9" fill="#bf6a48" stroke="#6a2612" stroke-width="0.8"/><circle cx="19.5" cy="17" r="1.9" fill="#bf6a48" stroke="#6a2612" stroke-width="0.8"/><circle cx="6.5" cy="21" r="1.9" fill="#bf6a48" stroke="#6a2612" stroke-width="0.8"/><circle cx="10.5" cy="21.5" r="1.9" fill="#bf6a48" stroke="#6a2612" stroke-width="0.8"/><circle cx="14.5" cy="21.5" r="1.9" fill="#bf6a48" stroke="#6a2612" stroke-width="0.8"/><circle cx="10" cy="24.5" r="1.9" fill="#bf6a48" stroke="#6a2612" stroke-width="0.8"/><circle cx="8.5" cy="2.5" r="0.6" fill="#f4cdb8"/><circle cx="13.5" cy="5.5" r="0.6" fill="#f4cdb8"/><circle cx="7" cy="9.5" r="0.6" fill="#f4cdb8"/><circle cx="15" cy="10" r="0.6" fill="#f4cdb8"/><circle cx="12.5" cy="13.5" r="0.6" fill="#f4cdb8"/><circle cx="7" cy="17" r="0.6" fill="#f4cdb8"/><circle cx="15" cy="17.5" r="0.6" fill="#f4cdb8"/><circle cx="10" cy="21" r="0.6" fill="#f4cdb8"/><circle cx="11" cy="12" r="0.8" fill="#3e1208"/><circle cx="15" cy="14" r="0.8" fill="#3e1208"/><circle cx="9" cy="16" r="0.8" fill="#3e1208"/><circle cx="13" cy="19" r="0.8" fill="#3e1208"/><circle cx="17" cy="9" r="0.8" fill="#3e1208"/></svg>
<div class="abs" style="left:222px;top:470px;width:30px;height:27px;background:#fff"></div><svg class="abs" style="left:222px;top:470px" width="30" height="27" viewBox="0 0 30 27"><path d="M3 16.5 C3 13 10 11.5 15 11.5 C20 11.5 27 13 27 16.5 C27 19.5 21 20.5 15 20.5 C9 20.5 3 19.5 3 16.5 Z M5 16.5 C5 18 10 18.5 15 18.5 C20 18.5 25 18 25 16.5 C25 14.5 20 14 15 14 C10 14 5 14.5 5 16.5 Z" fill="#b3b7bb" fill-rule="evenodd"/><circle cx="15.5" cy="11.5" r="5.3" fill="#a6d3e6"/><g fill="#1f4d6b"><path d="M12 8 L14 7 L13.5 9.5 Z"/><path d="M17 7.5 L19 8.5 L17.5 10 Z"/><path d="M11 12 L13 11 L12.5 13.5 Z"/><path d="M16.5 12.5 L18.5 12 L17 14.5 Z"/><path d="M14 14.5 L15.5 15.5 L13.5 16 Z"/></g><circle cx="15.5" cy="11" r="1.5" fill="#dff0f7"/></svg>
<svg class="abs" style="left:227px;top:521px" width="22" height="25" viewBox="0 0 22 25"><path d="M7 2 L12.5 6.5 L7.5 12 L2 7.5 Z" fill="#e8eef4" stroke="#7f8fa0" stroke-width="1"/><path d="M5.5 6 L8 4 L10 6.5 L7.5 8.5 Z" fill="#b7c9da"/><path d="M4 11 C1 16 3 23 8 23 C15 23 20 17 20 13 C20 9 16 8 12 8" fill="none" stroke="#aab6c2" stroke-width="1"/><path d="M5.5 11.5 C4 17 6 21 9 21 C13 21 17 17 18 13" fill="none" stroke="#c3ced8" stroke-width="0.9"/></svg>
<div class="abs" style="left:222px;top:571px;width:30px;height:26px;background:#fff"></div><svg class="abs" style="left:222px;top:571px" width="30" height="26" viewBox="0 0 30 26"><path d="M7.5 11 C9.5 8.5 18 8.5 22 11.5 C23 13 22 15 20 15 C16 16 10 15.5 8 14 C7 13 7 12 7.5 11 Z" fill="#b9bcbf" stroke="#3f4348" stroke-width="1.2"/><path d="M9 11.5 C11.5 10 15 10 17.5 11.5" fill="none" stroke="#2a2d31" stroke-width="1.3"/><path d="M10 13 L13 12 L15 13.5" fill="none" stroke="#5a5e63" stroke-width="0.9"/><circle cx="20.5" cy="12.8" r="1.7" fill="#15171a"/></svg>
<svg class="abs" style="left:227px;top:623px" width="20" height="26" viewBox="0 0 20 26"><path d="M2.5 12 C1.5 9 2.5 6 5 5.5" fill="none" stroke="#85817a" stroke-width="1.6"/><path d="M3 13.5 C5 16 9 16.5 10.5 16 C13 15.5 15.5 14 16 11 C16.5 9 16 7 14 6" fill="none" stroke="#a9a59d" stroke-width="1.3"/><path d="M5.5 4.5 L8.5 9 L6 10 Z" fill="#b9c3cb" stroke="#6d757c" stroke-width="0.8"/><path d="M9.5 1.8 C11 2 11.5 4 11 6.5 L9 9.5 L8 6 Z" fill="#c6ced5" stroke="#6d757c" stroke-width="0.8"/><path d="M11 6.5 L15 6 L13 9 Z" fill="#aab4bc" stroke="#7b838a" stroke-width="0.7"/><circle cx="9.8" cy="15.5" r="1.3" fill="#1b1b1b"/><circle cx="16" cy="11.5" r="0.9" fill="#2a2a2a"/><path d="M3.5 19 C5 23 14 23.5 16 19.5" fill="none" stroke="#e4e4e3" stroke-width="1.4"/><path d="M7 22 C9 23 11 23 13 22" fill="none" stroke="#ececeb" stroke-width="1.2"/></svg>
<div class="abs" style="left:222px;top:671px;width:30px;height:26px;background:#fff"></div><svg class="abs" style="left:222px;top:671px" width="30" height="26" viewBox="0 0 30 26"><ellipse cx="14.5" cy="14" rx="11.5" ry="4" fill="none" stroke="#d9b53a" stroke-width="1.6"/><path d="M3 13 C6 10.5 10 10 14 10 C19 10 23 10.5 26 13" fill="none" stroke="#c9a43a" stroke-width="1.2"/><path d="M10.5 7 C10.5 5 13 5 14 6.5 C15 5 17.5 5 17.5 7 C17.5 9 14 11.5 14 11.5 C14 11.5 10.5 9 10.5 7 Z" fill="#dfe6f0" stroke="#8a96a6" stroke-width="0.7"/><circle cx="14.5" cy="18" r="0.9" fill="#333"/></svg>
<svg class="abs" style="left:225px;top:722px" width="25" height="28" viewBox="0 0 25 28"><ellipse cx="12.2" cy="14" rx="11.5" ry="12.5" fill="#e8e6e4" stroke="#d1cfcd" stroke-width="0.8"/><ellipse cx="12.2" cy="12.5" rx="10" ry="9.5" fill="#f3f2f1"/><ellipse cx="12.2" cy="15" rx="7.5" ry="6.5" fill="#c18a50"/><g fill="#96683a"><circle cx="9" cy="12" r="0.7"/><circle cx="12" cy="11" r="0.7"/><circle cx="15" cy="13" r="0.7"/><circle cx="10" cy="16" r="0.7"/><circle cx="13" cy="17" r="0.7"/><circle cx="16" cy="16" r="0.7"/><circle cx="8" cy="14.5" r="0.7"/><circle cx="12" cy="14.5" r="0.7"/></g></svg>
<div class="abs" style="left:222px;top:771px;width:30px;height:28px;background:#fff"></div><svg class="abs" style="left:222px;top:771px" width="30" height="28" viewBox="0 0 30 28"><defs><radialGradient id="tg" cx="0.45" cy="0.45" r="0.6"><stop offset="0" stop-color="#a5e6fb"/><stop offset="0.55" stop-color="#3bb4ee"/><stop offset="1" stop-color="#0d47a8"/></radialGradient></defs><ellipse cx="15" cy="12.5" rx="13.5" ry="10.5" fill="url(#tg)"/><path d="M2.5 10 L8 3.5 L10 8 L5 14 Z M19 20 L26.5 12 L28 16 L23 21.5 Z M6 16 L12 20.5 L7 21 Z M16 2.5 L24 4 L20 8 Z M12 13 L16 17 L11 18 Z M22 9 L26 7.5 L24 12 Z" fill="#0a2a78" opacity="0.85"/><path d="M10 7 L17 6 L21 11 L15 14 Z" fill="#b4e9fb" opacity="0.85"/><path d="M20 15 L24 13 L22 18 Z" fill="#d0f2fd" opacity="0.8"/></svg>
<div class="abs" style="left:1870px;top:303px;width:18px;height:506px;background:#f1f1f1"></div>
<svg class="abs" style="left:1874px;top:309px" width="9" height="6" viewBox="0 0 9 6"><path d="M0.5 5.5 L4.5 1 L8.5 5.5 Z" fill="#a3a3a3"/></svg>
<div class="abs" style="left:1872px;top:320px;width:12.5px;height:95px;background:#c1c1c1"></div>
<svg class="abs" style="left:1874px;top:797px" width="9" height="6" viewBox="0 0 9 6"><path d="M0.5 0.5 L4.5 5 L8.5 0.5 Z" fill="#505050"/></svg>
<div class="abs" style="left:211px;top:809px;width:1677px;height:44px;background:#f5f5f5;border-top:1px solid #e0e0e0;border-bottom:1px solid #dcdcdc"></div>
<svg class="abs" style="left:227px;top:826px" width="9" height="9" viewBox="0 0 9 9"><path d="M1 0.5 V8.5" stroke="#b5bcc4" stroke-width="1.6"/><path d="M8 0.5 V8.5 L2.5 4.5 Z" fill="#b5bcc4"/></svg>
<svg class="abs" style="left:256px;top:826px" width="7" height="9" viewBox="0 0 7 9"><path d="M6 0.5 V8.5 L0.5 4.5 Z" fill="#b5bcc4"/></svg>
<div class="abs" style="left:272px;top:817px;width:27px;height:27px;background:#e84f1c;color:#fff;font-size:13px;line-height:27px;text-align:center">1</div>
<div class="abs" style="left:299px;top:817px;width:27px;height:27px;color:#f0545a;font-size:13px;line-height:27px;text-align:center">2</div>
<svg class="abs" style="left:335px;top:826px" width="7" height="9" viewBox="0 0 7 9"><path d="M1 0.5 V8.5 L6.5 4.5 Z" fill="#5f6f80"/></svg>
<svg class="abs" style="left:361px;top:826px" width="9" height="9" viewBox="0 0 9 9"><path d="M1 0.5 V8.5 L6.5 4.5 Z" fill="#5f6f80"/><path d="M8 0.5 V8.5" stroke="#5f6f80" stroke-width="1.6"/></svg>
<div class="abs" style="left:391px;top:817px;width:56px;height:27px;background:#f2f2f2;border:1px solid #e0e0e0;border-radius:3px"></div>
<div class="abs" style="left:400px;top:823px;font-size:13px;line-height:15px;color:#555">50</div>
<svg class="abs" style="left:429.8px;top:828px" width="8" height="7" viewBox="0 0 8 7"><path d="M0.5 0.5 H7.5 L4 6 Z" fill="#555"/></svg>
<div class="abs" style="left:454px;top:823px;font-size:13px;line-height:15px;color:#5a5a5a;white-space:nowrap">items per page</div>
<div class="abs" style="left:1767px;top:823px;font-size:12.9px;line-height:15px;color:#5a5a5a;white-space:nowrap">1 - 50 of 61 items</div>
<div class="abs" style="left:1869px;top:443px;width:31px;height:52px;background:#262f3b;border-radius:4px 0 0 4px"></div>
<div class="abs" style="left:1866px;top:461px;width:40px;height:16px;transform:rotate(-90deg);color:#e9ebee;font-weight:bold;font-size:12.5px;line-height:16px;text-align:center">Help</div>
<div class="abs" style="left:196px;top:899px;width:1704px;height:41px;background:#f5f6f8;border-top:1px solid #e3e6ea"></div>
<div class="abs" style="left:210px;top:910.5px;font-size:11.9px;line-height:15px;color:#7d7d7d;white-space:nowrap">&copy; 2009-2020 MindSpark LLC. - All rights reserved.</div>
<div class="abs" style="left:195px;top:36px;width:1px;height:902px;background:#19202a"></div>
<div class="abs" style="left:0;top:36px;width:196px;height:1px;background:#131b20"></div>
<div class="abs" style="left:196px;top:37px;width:2px;height:901px;background:#f1f4f8"></div>
<div class="abs" style="left:0;top:938px;width:1900px;height:2px;background:#fff"></div>
</body></html>
